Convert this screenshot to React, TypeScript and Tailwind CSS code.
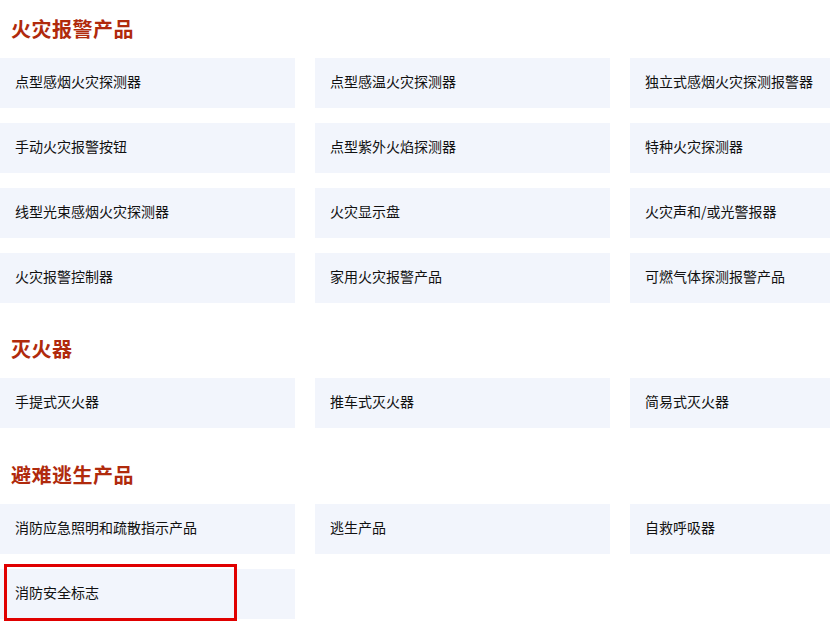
import React from "react";

const sections: { title: string; items: string[] }[] = [
  {
    title: "火灾报警产品",
    items: [
      "点型感烟火灾探测器",
      "点型感温火灾探测器",
      "独立式感烟火灾探测报警器",
      "手动火灾报警按钮",
      "点型紫外火焰探测器",
      "特种火灾探测器",
      "线型光束感烟火灾探测器",
      "火灾显示盘",
      "火灾声和/或光警报器",
      "火灾报警控制器",
      "家用火灾报警产品",
      "可燃气体探测报警产品",
    ],
  },
  {
    title: "灭火器",
    items: ["手提式灭火器", "推车式灭火器", "简易式灭火器"],
  },
  {
    title: "避难逃生产品",
    items: ["消防应急照明和疏散指示产品", "逃生产品", "自救呼吸器", "消防安全标志"],
  },
];

export default function App() {
  return (
    <div
      className="w-[830px] h-[630px] overflow-hidden bg-white"
      style={{ fontFamily: '"Noto Sans CJK SC", "Noto Sans", sans-serif' }}
    >
      {sections.map((s, si) => (
        <div
          key={s.title}
          className={si === 0 ? "" : si === 1 ? "mt-[17px]" : "mt-[18px]"}
        >
          <div className="h-[58px] flex items-center pl-[11px] pb-[1px]">
            <h2 className="text-[20px] leading-none font-bold text-[#b02a0c] tracking-[0.5px]">
              {s.title}
            </h2>
          </div>
          <div className="grid grid-cols-[295px_295px_295px] gap-x-[20px] gap-y-[15px]">
            {s.items.map((it) => (
              <div
                key={it}
                className="relative h-[50px] bg-[#f2f5fc] flex items-center pl-[15px] pb-[3px] text-[14px] text-[#111]"
              >
                {it}
                {it === "消防安全标志" && (
                  <div className="absolute left-[4px] top-[-5px] w-[233px] h-[57px] border-[3px] border-[#e00000]" />
                )}
              </div>
            ))}
          </div>
        </div>
      ))}
    </div>
  );
}
